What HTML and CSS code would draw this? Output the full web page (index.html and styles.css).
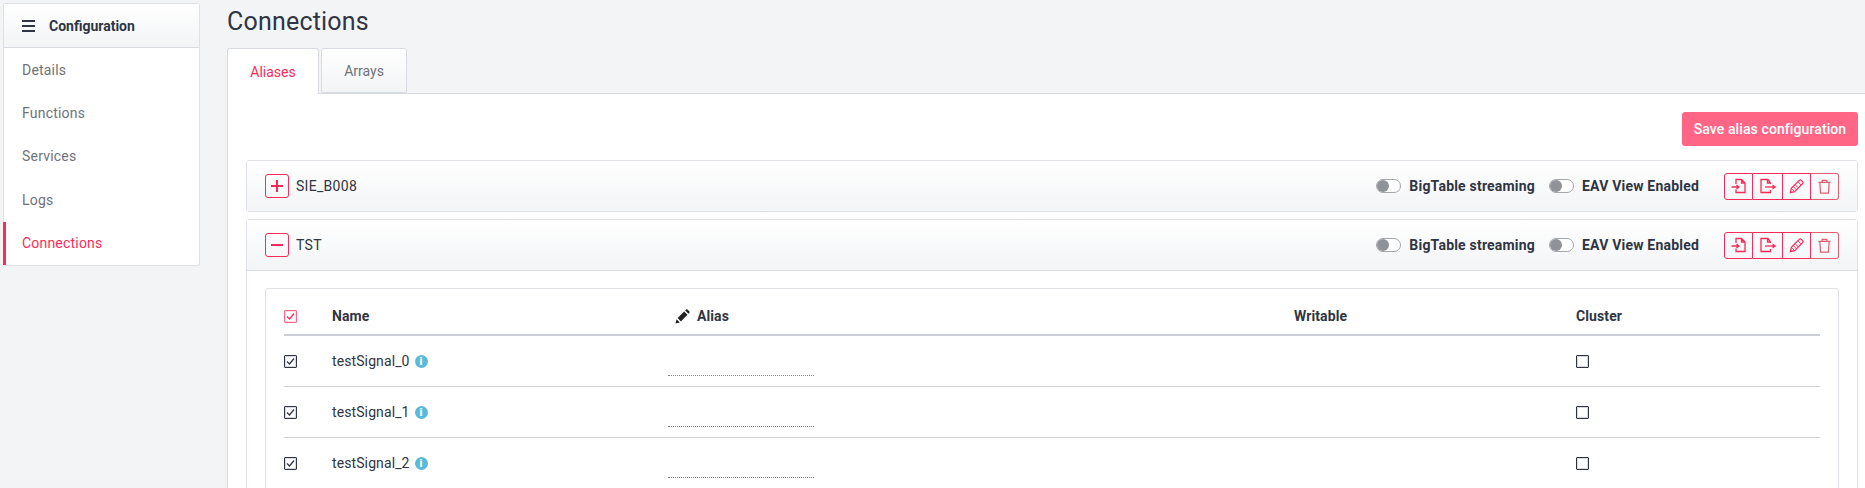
FILE: index.html
```html
<!DOCTYPE html>
<html lang="en">
  <head>
    <meta charset="UTF-8" />
    <title>Connections</title>
    <link rel="stylesheet" href="styles.css">
  </head>
  <body>
    <svg class="sprites" width="0" height="0">
      <symbol id="i-import" viewBox="0 0 16 16">
        <path d="M5 6V1.500h5.500L14 5v9.500H5V11.500M10.500 1.500V5H14" fill="none" stroke="currentColor" stroke-width="1.300"/>
        <path d="M0.500 9h6.500M5.500 7l2.500 2-2.500 2" fill="none" stroke="currentColor" stroke-width="1.300"/>
      </symbol>
      <symbol id="i-export" viewBox="0 0 18 16">
        <path d="M11.500 6V5L9 1.500H2v13h9.500V12M8.500 1.500V5h3" fill="none" stroke="currentColor" stroke-width="1.300"/>
        <path d="M6 9h8" fill="none" stroke="currentColor" stroke-width="1.300"/>
        <path d="M13.500 6.500L17.500 9l-4 2.500z" fill="currentColor"/>
      </symbol>
      <symbol id="i-pencil" viewBox="0 0 16 16">
        <path d="M1.500 14.500l1-4.500 8.500-8.500q1-1 2.200 0l1.300 1.300q1 1.200 0 2.200L6 13.500z" fill="none" stroke="currentColor" stroke-width="1.300"/>
        <path d="M2.500 10L6 13.500M4.500 8l3.500 3.500M6.500 6l3.500 3.500M9.500 3l3.500 3.500" fill="none" stroke="currentColor" stroke-width="1"/>
      </symbol>
      <symbol id="i-trash" viewBox="0 0 16 16">
        <path d="M1.500 3.500h13M5.500 3.500V1.500h5v2M3 3.500l.8 11.500h8.400l.8-11.500" fill="none" stroke="currentColor" stroke-width="1.300"/>
      </symbol>
    </svg>

    <div class="layout">
      <nav class="sidebar">
        <div class="sidebar-head">
          <span class="burger"><i></i><i></i><i></i></span>
          Configuration
        </div>
        <a class="side-link">Details</a>
        <a class="side-link">Functions</a>
        <a class="side-link">Services</a>
        <a class="side-link">Logs</a>
        <a class="side-link active">Connections</a>
      </nav>

      <main class="content">
        <h1 class="title">Connections</h1>
        <div class="tabs">
          <div class="tab active">Aliases</div>
          <div class="tab">Arrays</div>
        </div>

        <div class="panel">
          <div class="toolbar">
            <button class="btn-save">Save alias configuration</button>
          </div>

          <section class="accordion">
            <header class="acc-head">
              <span class="expander"><span class="plus"></span></span>
              <span class="acc-name">SIE_B008</span>
              <div class="acc-tools">
                <span class="toggle"></span><span class="toggle-label">BigTable streaming</span>
                <span class="toggle second"></span><span class="toggle-label">EAV View Enabled</span>
                <div class="btn-group">
                  <span class="icon-btn first"><svg width="16" height="16"><use href="#i-import"/></svg></span>
                  <span class="icon-btn mid"><svg width="18" height="16"><use href="#i-export"/></svg></span>
                  <span class="icon-btn edit"><svg width="15" height="15"><use href="#i-pencil"/></svg></span>
                  <span class="icon-btn last"><svg width="15" height="15"><use href="#i-trash"/></svg></span>
                </div>
              </div>
            </header>
          </section>

          <section class="accordion">
            <header class="acc-head open">
              <span class="expander"><span class="minus"></span></span>
              <span class="acc-name">TST</span>
              <div class="acc-tools">
                <span class="toggle"></span><span class="toggle-label">BigTable streaming</span>
                <span class="toggle second"></span><span class="toggle-label">EAV View Enabled</span>
                <div class="btn-group">
                  <span class="icon-btn first"><svg width="16" height="16"><use href="#i-import"/></svg></span>
                  <span class="icon-btn mid"><svg width="18" height="16"><use href="#i-export"/></svg></span>
                  <span class="icon-btn edit"><svg width="15" height="15"><use href="#i-pencil"/></svg></span>
                  <span class="icon-btn last"><svg width="15" height="15"><use href="#i-trash"/></svg></span>
                </div>
              </div>
            </header>

            <div class="acc-body">
              <div class="card">
                <div class="row head">
                  <span class="check red"><svg width="9" height="9" viewBox="0 0 9 9"><path d="M1 4.500l2.500 2.500L8 1.500" fill="none" stroke="currentColor" stroke-width="1.300"/></svg></span>
                  <span>Name</span>
                  <span class="alias-head">
                    <svg width="15" height="15" viewBox="0 0 16 16"><path d="M0.500 15.500l1.200-4.700 3.500 3.500zM2.800 9.700l7-7 3.500 3.500-7 7zM10.900 1.600l1-1q.7-.6 1.400 0l2.100 2.100q.6.700 0 1.400l-1 1z" fill="#222"/></svg>
                    Alias
                  </span>
                  <span>Writable</span>
                  <span>Cluster</span>
                </div>

                <div class="row">
                  <span class="check"><svg width="9" height="9" viewBox="0 0 9 9"><path d="M1 4.500l2.500 2.500L8 1.500" fill="none" stroke="currentColor" stroke-width="1.300"/></svg></span>
                  <span class="signal">testSignal_0 <span class="info">i</span></span>
                  <span class="alias-input"></span>
                  <span></span>
                  <span class="check"></span>
                </div>
                <div class="row">
                  <span class="check"><svg width="9" height="9" viewBox="0 0 9 9"><path d="M1 4.500l2.500 2.500L8 1.500" fill="none" stroke="currentColor" stroke-width="1.300"/></svg></span>
                  <span class="signal">testSignal_1 <span class="info">i</span></span>
                  <span class="alias-input"></span>
                  <span></span>
                  <span class="check"></span>
                </div>
                <div class="row">
                  <span class="check"><svg width="9" height="9" viewBox="0 0 9 9"><path d="M1 4.500l2.500 2.500L8 1.500" fill="none" stroke="currentColor" stroke-width="1.300"/></svg></span>
                  <span class="signal">testSignal_2 <span class="info">i</span></span>
                  <span class="alias-input"></span>
                  <span></span>
                  <span class="check"></span>
                </div>
              </div>
            </div>
          </section>
        </div>
      </main>
    </div>
  </body>
</html>
```

FILE: styles.css
```css
html,
body {
  margin: 0;
  height: 488px;
  overflow: hidden;
}

body {
  background: #f3f4f6;
  font-family: Roboto, "Liberation Sans", sans-serif;
  font-size: 14px;
  color: #2f3542;
}

.sprites {
  position: absolute;
}

.layout {
  display: flex;
  align-items: flex-start;
  height: 488px;
  overflow: hidden;
}

/* sidebar */
.sidebar {
  width: 197px;
  margin: 3px 0 0 3px;
  box-sizing: border-box;
  background: #fff;
  border: 1px solid #dfe1e6;
  border-left: 0;
  border-radius: 3px;
  flex: none;
}

.sidebar-head {
  height: 44px;
  box-sizing: border-box;
  display: flex;
  align-items: center;
  gap: 14px;
  padding-left: 18px;
  font-size: 14px;
  font-weight: 700;
  background: linear-gradient(#fff, #f3f4f6);
  border-bottom: 1px solid #d8dbe1;
  border-left: 1px solid #dfe1e6;
}

.burger {
  width: 13px;
  display: flex;
  flex-direction: column;
  gap: 3px;
}

.burger i {
  height: 2px;
  background: #2f3542;
}

.side-link {
  display: flex;
  align-items: center;
  height: 43.4px;
  padding-left: 18px;
  color: #6f7278;
  border-left: 1px solid #dfe1e6;
  letter-spacing: 0.2px;
}

.side-link.active {
  color: #fb2a58;
  padding-left: 16px;
  border-left: 3px solid #fb2a58;
}

/* main area */
.content {
  flex: 1;
  margin-left: 27px;
  min-width: 0;
}

.title {
  margin: 0;
  height: 48px;
  font-size: 25px;
  font-weight: 400;
  line-height: 44px;
  letter-spacing: 0.2px;
}

.tabs {
  display: flex;
  gap: 2px;
  height: 45px;
}

.tab {
  box-sizing: border-box;
  width: 86px;
  height: 45px;
  display: flex;
  align-items: center;
  justify-content: center;
  border: 1px solid #d8dbe1;
  border-radius: 3px 3px 0 0;
  background: linear-gradient(#fff, #f3f4f6);
  color: #6f7278;
}

.tab.active {
  width: 92px;
  height: 46px;
  color: #fb2a58;
  background: #fff;
  border-bottom: 0;
  position: relative;
  z-index: 1;
}

.panel {
  background: #fff;
  border-top: 1px solid #d8dbe1;
  border-left: 1px solid #d8dbe1;
  padding: 18px 7px 0 18px;
  height: 400px;
}

.toolbar {
  display: flex;
  justify-content: flex-end;
  margin-bottom: 14px;
}

.btn-save {
  height: 34px;
  width: 176px;
  border: 0;
  border-radius: 3px;
  background: #ff6685;
  color: #fff;
  font: 500 14px Roboto, sans-serif;
  letter-spacing: 0.1px;
}

/* accordion */
.accordion {
  border: 1px solid #dfe1e6;
  border-radius: 3px;
  margin-bottom: 7px;
  background: #fff;
}

.acc-head {
  height: 50px;
  display: flex;
  align-items: center;
  padding-left: 18px;
  background: linear-gradient(#fff, #f3f4f6);
}

.acc-head.open {
  border-bottom: 1px solid #d8dbe1;
}

.expander {
  width: 24px;
  height: 24px;
  box-sizing: border-box;
  border: 1px solid #fb2a58;
  border-radius: 3px;
  display: flex;
  align-items: center;
  justify-content: center;
  position: relative;
}

.plus,
.minus {
  display: block;
  width: 12px;
  height: 2px;
  background: #fb2a58;
  position: relative;
}

.plus::after {
  content: "";
  position: absolute;
  left: 5px;
  top: -5px;
  width: 2px;
  height: 12px;
  background: #fb2a58;
}

.acc-name {
  margin-left: 7px;
  letter-spacing: 0.3px;
}

.acc-tools {
  margin-left: auto;
  display: flex;
  align-items: center;
  padding-right: 18px;
}

.toggle {
  width: 25px;
  height: 14px;
  box-sizing: border-box;
  border: 1px solid #a3a6ab;
  border-radius: 7px;
  background: #fff;
  position: relative;
}

.toggle::before {
  content: "";
  position: absolute;
  left: 0;
  top: 0;
  width: 12px;
  height: 12px;
  border-radius: 50%;
  background: #8f9297;
}

.toggle.second {
  margin-left: 14px;
}

.toggle-label {
  margin-left: 8px;
  font-weight: 700;
  letter-spacing: 0.2px;
}

.btn-group {
  display: flex;
  margin-left: 25px;
  height: 27px;
  color: #fb2a58;
}

.icon-btn {
  box-sizing: border-box;
  display: flex;
  align-items: center;
  justify-content: center;
  width: 29px;
  border: 1px solid #fb2a58;
  border-left: 0;
}

.icon-btn.first {
  border-left: 1px solid #fb2a58;
  border-radius: 3px 0 0 3px;
}

.icon-btn.mid {
  width: 30px;
}

.icon-btn.edit {
  width: 28px;
}

.icon-btn.last {
  width: 28px;
  color: #e0606f;
  border-color: #e0606f;
  border-radius: 0 3px 3px 0;
}

.acc-body {
  padding: 17px 18px 40px;
}

/* alias table */
.card {
  border: 1px solid #dfe1e6;
  border-radius: 3px;
  padding: 0 18px;
}

.row {
  display: grid;
  grid-template-columns: 48px 335px 627px 282px 1fr;
  align-items: center;
  height: 51px;
  box-sizing: border-box;
  border-bottom: 1px solid #d0d4da;
}

.row.head {
  height: 47px;
  padding-top: 9px;
  font-weight: 700;
  font-size: 14px;
  letter-spacing: 0.1px;
  border-bottom: 2px solid #ccd0d6;
}

.check {
  width: 13px;
  height: 13px;
  box-sizing: border-box;
  border: 1px solid #2f3542;
  box-shadow: inset 0 0 0 1px rgba(47, 53, 66, 0.2);
  border-radius: 1px;
  display: flex;
  align-items: center;
  justify-content: center;
  color: #2f3542;
}

.check.red {
  border-color: #ff6685;
  box-shadow: inset 0 0 0 1px rgba(255, 102, 133, 0.2);
  color: #fb2a58;
}

.signal {
  display: flex;
  align-items: center;
  gap: 5px;
  letter-spacing: 0.1px;
}

.info {
  width: 13px;
  height: 13px;
  border-radius: 50%;
  background: #5bbad9;
  color: #fff;
  font: 700 10px/13px "DejaVu Sans", sans-serif;
  text-align: center;
}

.alias-head {
  display: flex;
  align-items: center;
  gap: 7px;
  padding-left: 8px;
}

.alias-input {
  width: 146px;
  align-self: end;
  margin-bottom: 10px;
  margin-left: 1px;
  border-bottom: 1px dotted #808489;
}
```
